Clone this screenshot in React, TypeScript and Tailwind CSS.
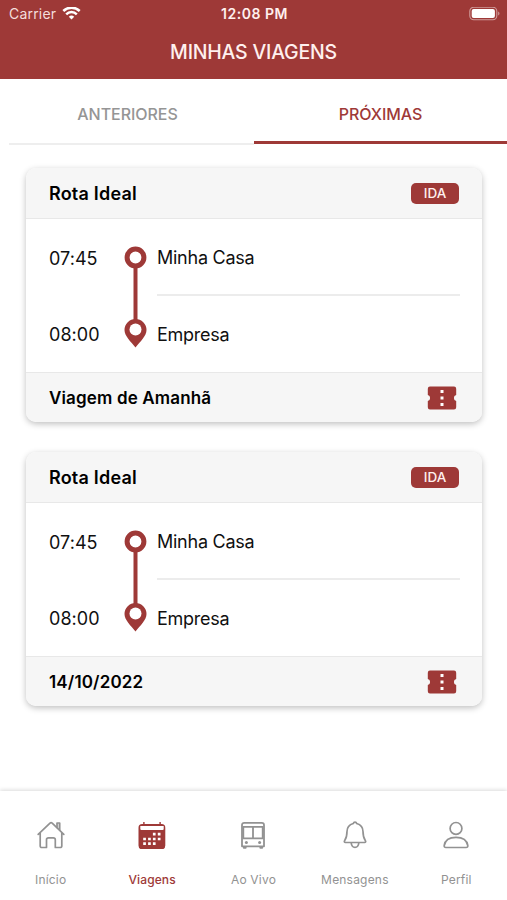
import React from 'react';

interface Trip {
    id: number;
    route: string;
    direction: string;
    departure: string;
    origin: string;
    arrival: string;
    destination: string;
    label: string;
}

interface NavItem {
    label: string;
    icon: React.ReactNode;
    active?: boolean;
}

const trips: Trip[] = [
    { id: 1, route: 'Rota Ideal', direction: 'IDA', departure: '07:45', origin: 'Minha Casa', arrival: '08:00', destination: 'Empresa', label: 'Viagem de Amanhã' },
    { id: 2, route: 'Rota Ideal', direction: 'IDA', departure: '07:45', origin: 'Minha Casa', arrival: '08:00', destination: 'Empresa', label: '14/10/2022' },
];

const HomeIcon = () => (
    <svg width="28" height="28" viewBox="0 0 28 28" fill="none" stroke="currentColor" strokeWidth="1.7" strokeLinecap="round" strokeLinejoin="round">
        <path d="M1.2 13.3 13 2.2a1.6 1.6 0 0 1 2.2 0L26.8 13.300M3.200 12v13a1.500 1.500 0 0 0 1.500 1.500H9.500v-7.700a2 2 0 0 1 2-2h4.800a2 2 0 0 1 2 2v7.700h5a1.500 1.500 0 0 0 1.500-1.500V12" />
        <path d="M20 6.300V2h2.700v6.700" fill="currentColor" fillOpacity="0.3" />
    </svg>
);

const CalendarIcon = () => (
    <svg width="28" height="28" viewBox="0 0 28 28">
        <path fill="currentColor" d="M5.200 0h1.400v2h14.800V0h1.400v2h.8a3.700 3.700 0 0 1 3.700 3.700v17.900a3.700 3.700 0 0 1-3.700 3.700H4.200a3.700 3.700 0 0 1-3.700-3.700V5.700A3.700 3.700 0 0 1 4.200 2h1z" transform="translate(0 1)" />
        <path fill="#fff" d="M2.300 5h23.400v3a1 1 0 0 1-1 1H3.300a1 1 0 0 1-1-1z" />
        <path stroke="#fff" strokeWidth="2.7" d="M14.900 13.200h2.700M19.800 13.200h2.700M5.200 18h2.700M10.100 18h2.700M14.900 18h2.700M19.800 18h2.700M5.200 22.700h2.700M10.100 22.700h2.700M14.900 22.700h2.700" />
    </svg>
);

const BusIcon = () => (
    <svg width="28" height="28" viewBox="0 0 28 28" fill="none" stroke="currentColor" strokeWidth="1.8" strokeLinejoin="round">
        <path d="M5.200 1.800h17.600a2.200 2.200 0 0 1 2.200 2.200V25.300H3V4a2.200 2.200 0 0 1 2.200-2.200z" />
        <path d="M3.500 5.800h21M4.300 6v11.500M23.700 6v11.500M14 6v11.500M3.500 17.300h21" />
        <path d="M4.800 25.500v1.300h1.900v-1.300M21.300 25.500v1.300h1.900v-1.300" />
        <circle cx="7.400" cy="21.400" r="1.500" fill="currentColor" stroke="none" />
        <circle cx="20.600" cy="21.400" r="1.500" fill="currentColor" stroke="none" />
    </svg>
);

const BellIcon = () => (
    <svg width="28" height="28" viewBox="0 0 28 28" fill="none" stroke="currentColor" strokeWidth="1.7" strokeLinejoin="round">
        <path d="M12.300 2.500a1.750 1.750 0 0 1 3.400 0c4.300 1.300 6.300 4.200 6.300 8 0 5 .8 7 2.400 9.200.6.900.2 1.800-.8 1.800H4.400c-1 0-1.400-.9-.8-1.800C5.200 17.500 6 15.500 6 10.500c0-3.800 2-6.700 6.300-8zM10.200 22c.3 2.700 1.700 4.400 3.800 4.400s3.500-1.700 3.800-4.400" />
    </svg>
);

const PersonIcon = () => (
    <svg width="28" height="28" viewBox="0 0 28 28" fill="none" stroke="currentColor" strokeWidth="1.7" strokeLinejoin="round">
        <circle cx="14" cy="7.400" r="5.900" />
        <path d="M2.200 24.500C3 19.500 7 16.300 14 16.300s11 3.200 11.800 8.200c.1 1.300-.5 2-1.700 2H3.900c-1.200 0-1.800-.7-1.700-2z" />
    </svg>
);

const navItems: NavItem[] = [
    { label: 'Início', icon: <HomeIcon /> },
    { label: 'Viagens', icon: <CalendarIcon />, active: true },
    { label: 'Ao Vivo', icon: <BusIcon /> },
    { label: 'Mensagens', icon: <BellIcon /> },
    { label: 'Perfil', icon: <PersonIcon /> },
];

const StatusBar = () => (
    <div className="grid grid-cols-3 items-center h-[27px] pl-[9px] pr-[7px]">
        <div className="flex items-center gap-[6px] text-[#f4dedc]">
            <span className="text-[14px] tracking-[0.2px]">Carrier</span>
            <svg width="19" height="14" viewBox="0 0 19 14" fill="none" stroke="#fff" strokeWidth="2.5">
                <path d="M1.300 4a11.700 11.700 0 0 1 16.400 0M4.200 7.300a7.500 7.500 0 0 1 10.600 0" />
                <path d="M6.800 9.700a3.900 3.900 0 0 1 5.400 0L9.500 12.600z" fill="#fff" stroke="none" />
            </svg>
        </div>
        <span className="text-center font-semibold whitespace-nowrap text-[14px] tracking-[0.5px]">12:08 PM</span>
        <div className="flex justify-end">
            <svg width="31" height="14" viewBox="0 0 31 14">
                <rect x="0.800" y="0.200" width="27" height="12.600" rx="4" fill="none" stroke="#cf9c9b" strokeWidth="1.1" />
                <rect x="2.700" y="2" width="23.200" height="9" rx="2" fill="#fff" />
                <path d="M29.200 4.500v4c1.700-.7 1.700-3.300 0-4z" fill="#cf9c9b" />
            </svg>
        </div>
    </div>
);

const RouteLine = () => (
    <svg className="shrink-0" width="23" height="102" viewBox="0 0 23 102">
        <path d="M11.500 20v56" stroke="#9e3937" strokeWidth="4" />
        <circle cx="11.500" cy="11.500" r="8.400" fill="#fff" stroke="#9e3937" strokeWidth="5" />
        <path fill="#9e3937" d="M11.500 73A11 11 0 0 0 .5 84c0 6 6.300 11.500 11 17.500 4.700-6 11-11.500 11-17.500a11 11 0 0 0-11-11z" />
        <circle cx="11.500" cy="83.500" r="6" fill="#fff" />
    </svg>
);

const TicketIcon = () => (
    <svg width="30" height="24" viewBox="0 0 30 24">
        <path fill="#9e3937" d="M3 .5h24a2.200 2.200 0 0 1 2.200 2.200V9a3.100 3.100 0 0 0 0 6v6.300a2.200 2.200 0 0 1-2.200 2.200H3a2.200 2.200 0 0 1-2.200-2.200V15a3.100 3.100 0 0 0 0-6V2.700A2.200 2.200 0 0 1 3 .5z" />
        <path stroke="#fff" strokeWidth="3" d="M15 4v3M15 10.500v3M15 17v3" />
    </svg>
);

const TripCard: React.FC<{ trip: Trip }> = ({ trip }) => (
    <div className="h-[254px] flex flex-col rounded-[10px] overflow-hidden bg-white shadow-[0_2px_6px_rgba(0,0,0,0.25)]">
        <div className="h-[51px] shrink-0 flex items-center justify-between px-[23px] bg-[#f6f6f6] border-b border-[#e8e8e8]">
            <h2 className="pt-px text-[18px] font-semibold tracking-[0.2px] text-black">{trip.route}</h2>
            <span className="w-12 h-[21px] flex items-center justify-center rounded-[5px] bg-[#9e3937] text-[#fff0ee] text-[13.5px] font-medium">{trip.direction}</span>
        </div>
        <div className="flex-1 flex pl-[23px] pr-[22px] text-[18px]">
            <div className="w-[75px] flex flex-col tracking-[0.05px]">
                <span className="h-[77px] pt-px flex items-center">{trip.departure}</span>
                <span className="h-[76px] flex items-center">{trip.arrival}</span>
            </div>
            <div className="pt-[27px]">
                <RouteLine />
            </div>
            <div className="flex-1 ml-[10px] flex flex-col tracking-[-0.25px]">
                <span className="h-[77px] pt-px flex items-center border-b-2 border-[#ececec]">{trip.origin}</span>
                <span className="h-[76px] flex items-center">{trip.destination}</span>
            </div>
        </div>
        <div className="h-[50px] shrink-0 flex items-center justify-between pt-px pl-[23px] pr-[25px] bg-[#f6f6f6] border-t border-[#e8e8e8]">
            <span className="pt-px text-[17px] font-semibold tracking-[0.15px] text-black">{trip.label}</span>
            <TicketIcon />
        </div>
    </div>
);

const App: React.FC = () => {
    return (
        <div className="w-[507px] h-[900px] flex flex-col bg-white overflow-hidden text-[#101010] font-[Inter,'Liberation_Sans',sans-serif]">
            <header className="h-[79px] shrink-0 bg-[#9e3937] text-[#fff0ee]">
                <StatusBar />
                <h1 className="h-[51px] flex items-center justify-center text-[19.5px] font-medium tracking-[-0.22px]">MINHAS VIAGENS</h1>
            </header>

            <div className="h-[66px] shrink-0 flex text-[16px]">
                <button className="flex-1 ml-[9px] pt-[5px] pr-[8px] border-b-2 border-[#eeeeee] text-[#959595] font-medium tracking-[-0.05px]">ANTERIORES</button>
                <button className="w-[253px] h-[65px] pt-[8px] border-b-[3px] border-[#9e3937] text-[#9e3937] font-medium tracking-[-0.05px]">PRÓXIMAS</button>
            </div>

            <main className="flex-1 flex flex-col gap-[30px] pt-[23px] pl-[26px] pr-[25px]">
                {trips.map(trip => (
                    <TripCard key={trip.id} trip={trip} />
                ))}
            </main>

            <nav className="h-[109px] shrink-0 grid grid-cols-5 bg-white shadow-[0_-1px_4px_rgba(0,0,0,0.15)]">
                {navItems.map(item => (
                    <button
                        key={item.label}
                        className={`flex flex-col items-center pt-[30px] gap-[23px] ${item.active ? 'text-[#9e3937] font-medium' : 'text-[#929292]'}`}
                    >
                        {item.icon}
                        <span className={`text-[12px] leading-4 ${item.active ? 'tracking-[0.1px]' : 'tracking-[0.2px]'}`}>{item.label}</span>
                    </button>
                ))}
            </nav>
        </div>
    );
};

export default App;
